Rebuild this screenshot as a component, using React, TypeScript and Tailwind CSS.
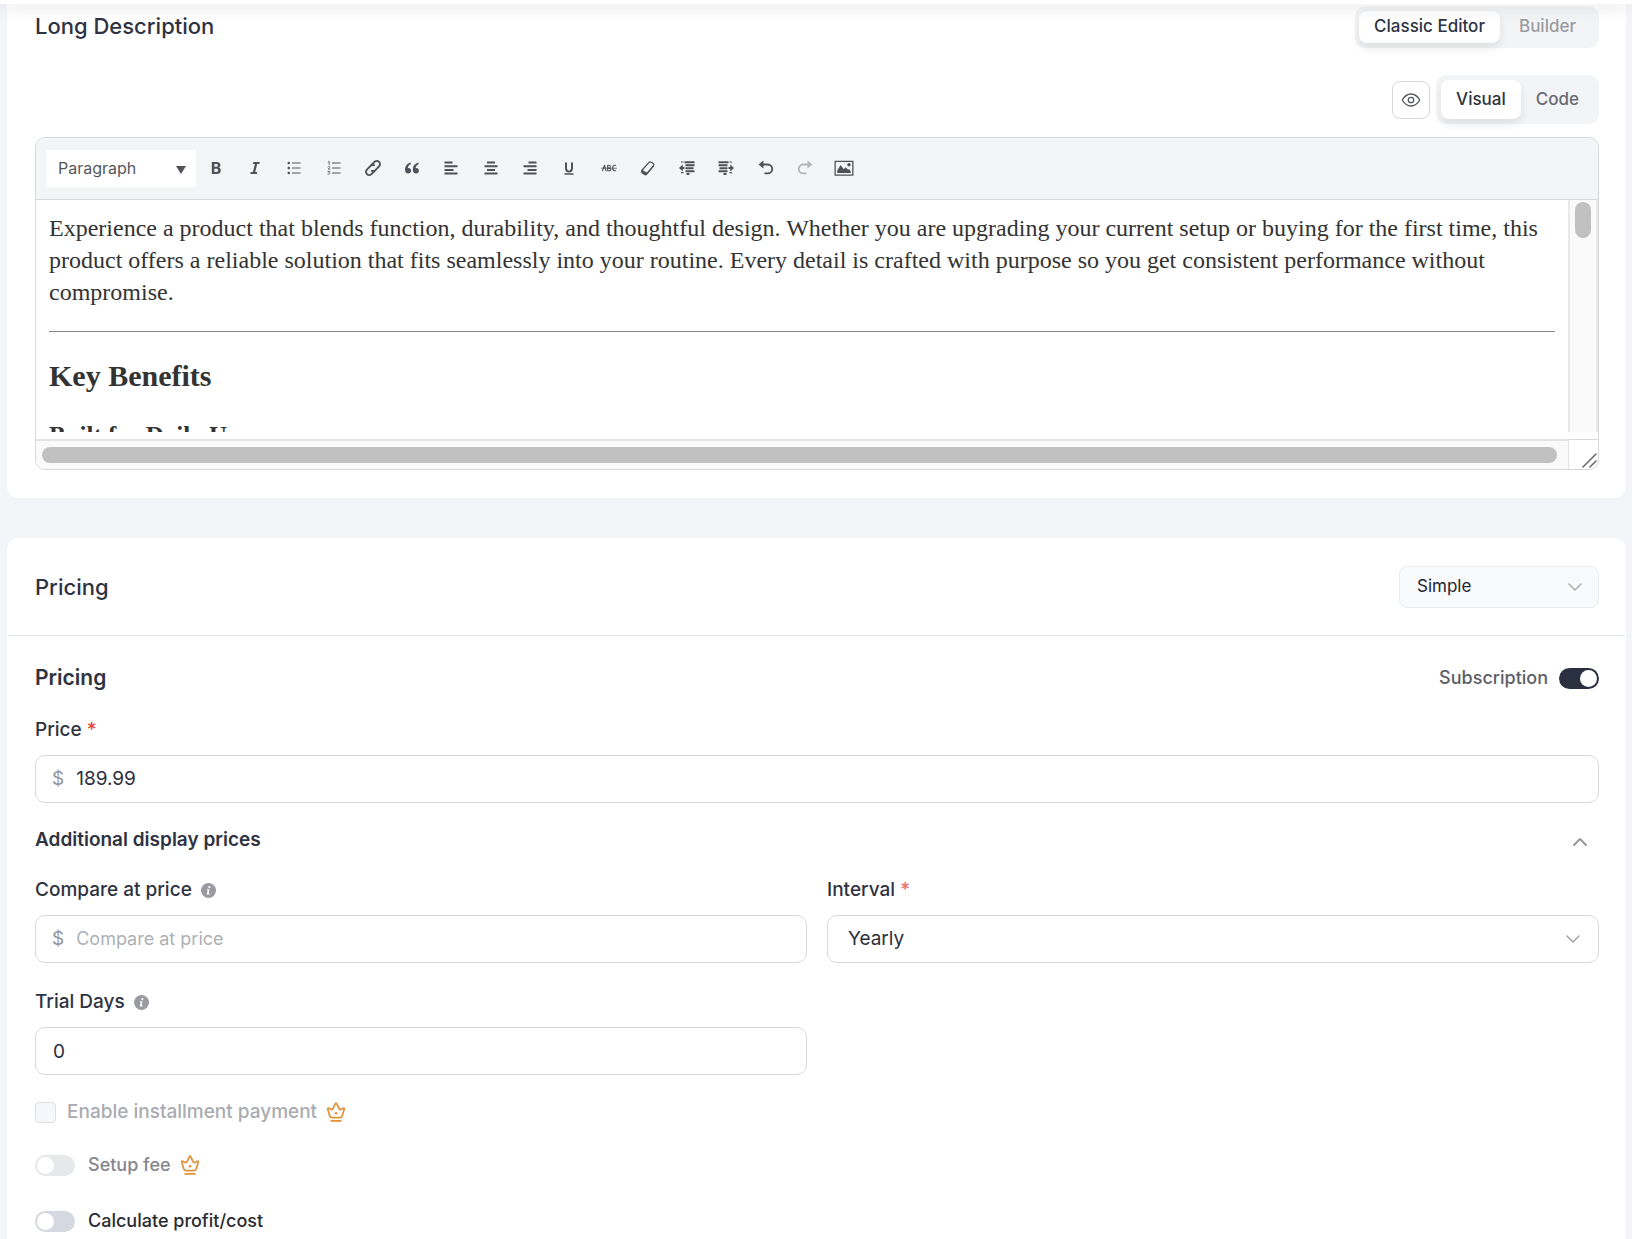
import { useState } from 'react'
import type { InputHTMLAttributes, ReactNode } from 'react'
import clsx from 'clsx'

const FIELD = 'h-12 w-full rounded-[10px] border border-[#d6d8dc] bg-white text-[19px] text-[#2b2e3c] outline-none'
const LABEL = 'text-[19px] leading-6 font-medium text-[#2f3241]'

const stroke = { fill: 'none', stroke: 'currentColor', strokeLinecap: 'round', strokeLinejoin: 'round' } as const

function Icon({ children, className = 'size-5' }: { children: ReactNode; className?: string }) {
  return (
    <svg viewBox="0 0 20 20" className={className} fill="currentColor" aria-hidden="true">
      {children}
    </svg>
  )
}

const tools: { label: string; icon: ReactNode; disabled?: boolean }[] = [
  {
    label: 'Bold',
    icon: (
      <path fillRule="evenodd" d="M5.8 4h4.7c2.5 0 3.9 1.1 3.9 3 0 1.3-.7 2.2-1.8 2.6 1.4.3 2.2 1.3 2.2 2.8 0 2.3-1.6 3.6-4.3 3.6H5.8zM8.4 6v2.8h1.7c1.1 0 1.7-.5 1.7-1.4S11.2 6 10.1 6zm0 4.7V14h1.9c1.2 0 1.8-.6 1.8-1.7 0-1-.7-1.6-1.9-1.6z" />
    ),
  },
  { label: 'Italic', icon: <path d="M8.3 4h6.4l-.4 1.9h-2.1L10.2 14h2.1l-.4 2H5.3l.4-2h2.2L9.9 5.9H7.9z" /> },
  {
    label: 'Bulleted list',
    icon: (
      <>
        <circle cx="4.8" cy="5" r="1.3" />
        <circle cx="4.8" cy="10" r="1.3" />
        <circle cx="4.8" cy="15" r="1.3" />
        <path d="M8 4.500h8.500v1H8zM8 9.500h8.500v1H8zM8 14.500h8.500v1H8z" />
      </>
    ),
  },
  {
    label: 'Numbered list',
    icon: (
      <>
        <path d="M8 4.500h8.500v1H8zM8 9.500h8.500v1H8zM8 14.500h8.500v1H8z" />
        <path {...stroke} strokeWidth=".8" d="m4.200 4 1-.7v3.400M4 8.700c.6-.6 1.800-.4 1.800.4 0 .7-1.200 1.300-1.800 2h2M4 13.400h1.800l-1 1.200c1.500 0 1.400 2.100-.9 1.700" />
      </>
    ),
  },
  {
    label: 'Link',
    icon: (
      <g {...stroke} strokeWidth="1.900" transform="rotate(-45 10 10)">
        <path d="M9 13.200H4.600a3.200 3.200 0 0 1 0-6.400h5.200a3.200 3.200 0 0 1 2.900 2" />
        <path d="M11 6.800h4.400a3.200 3.200 0 0 1 0 6.400h-5.200a3.200 3.200 0 0 1-2.900-2" />
      </g>
    ),
  },
  {
    label: 'Quote',
    icon: (
      <path d="M8.700 4.400C5 5.300 3 7.800 3 11.500 3 14 4.200 15.600 6.200 15.600c1.700 0 2.900-1.200 2.900-2.800S8 10.100 6.500 10.100c-.3 0-.5 0-.7.1.2-1.900 1.300-3.300 3.200-4.200zM16.500 4.400c-3.700.9-5.700 3.400-5.700 7.100 0 2.500 1.200 4.100 3.200 4.100 1.700 0 2.900-1.200 2.900-2.800s-1.100-2.700-2.600-2.700c-.3 0-.5 0-.7.1.2-1.900 1.300-3.300 3.200-4.200z" />
    ),
  },
  { label: 'Align left', icon: <path d="M3.500 3.500h8v2h-8zM3.500 7.200h13v2h-13zM3.500 10.900h9v2h-9zM3.500 14.600h13v2h-13z" /> },
  { label: 'Align center', icon: <path d="M6 3.500h8v2H6zM3.500 7.200h13v2h-13zM6 10.900h8v2H6zM3.500 14.600h13v2h-13z" /> },
  { label: 'Align right', icon: <path d="M8.500 3.500h8v2h-8zM3.500 7.200h13v2h-13zM7.500 10.900h9v2h-9zM3.500 14.600h13v2h-13z" /> },
  {
    label: 'Underline',
    icon: (
      <>
        <path d="M6 4.500h2v5.300c0 1.900.7 2.800 2 2.800s2-.9 2-2.800V4.500h2v5.400c0 3-1.400 4.500-4 4.500s-4-1.500-4-4.500z" />
        <path d="M5.500 15.300h9v1.400h-9z" />
      </>
    ),
  },
  {
    label: 'Strikethrough',
    icon: (
      <g {...stroke} strokeWidth="1.100">
        <path d="m3.500 12.800 2-5.600 1.600 5.600M8.700 7.200v5.600h1.500c2.200 0 2-2.700 0-2.700H8.700h1.200c1.900 0 1.900-2.900 0-2.900zM16.700 7.300h-1c-2.700 0-2.700 5.400 0 5.400h1" />
        <path strokeWidth=".8" d="M2.500 10.200h15" />
      </g>
    ),
  },
  {
    label: 'Clear formatting',
    icon: (
      <>
        <path {...stroke} strokeWidth="1.300" d="m4 12.200 6.800-7.600c.7-.8 1.600-1 2.500-.4l1.900 1.400c.8.7.9 1.500.2 2.300L8.700 15.600c-.6.7-1.400.9-2.200.4l-1.900-1.300C3.700 14.100 3.400 13 4 12.200z" />
        <path d="M3.700 11.600 9 14.800l6.900-7.600.1 1.400-7 8.100c-.7.800-1.800.9-2.800.3l-2-1.400c-1.100-.8-1.400-2.500-.5-4z" />
      </>
    ),
  },
  {
    label: 'Decrease indent',
    icon: (
      <path d="M7.500 3.200h10v2h-10zM8.500 6.200h9v2h-9zM8.500 9.200h8v2h-8zM8.500 12.200h9v2h-9zM9.500 15h3v2h-3zM4 3.400h2.600v1.200H4zM4 14h2.600v1.200H4zM7.500 9H5.800V6.500L2 10l3.800 3.500v-2.500h1.700z" />
    ),
  },
  {
    label: 'Increase indent',
    icon: (
      <path d="M2.500 3.200h10v2h-10zM2.500 6.200h9v2h-9zM3.500 9.200h8v2h-8zM2.500 12.200h9v2h-9zM7.500 15h3v2h-3zM13.400 3.400H16v1.200h-2.600zM13.400 14H16v1.200h-2.600zM12.500 9h1.700V6.500L18 10l-3.800 3.500v-2.500h-1.700z" />
    ),
  },
  {
    label: 'Undo',
    icon: (
      <>
        <path {...stroke} strokeWidth="1.900" strokeLinecap="butt" d="M6 6.500h5.800a4.400 4.400 0 0 1 0 8.900H8.500" />
        <path d="M7.500 2.500v8L2.500 6.500z" />
      </>
    ),
  },
  {
    label: 'Redo',
    disabled: true,
    icon: (
      <>
        <path {...stroke} strokeWidth="1.900" strokeLinecap="butt" d="M14 6.500H8.200a4.400 4.400 0 0 0 0 8.900h3.300" />
        <path d="M12.500 2.500v8l5-4z" />
      </>
    ),
  },
  {
    label: 'Add media',
    icon: (
      <>
        <path fillRule="evenodd" d="M.5 2.700h19v15H.5zM1.800 4v12.400h16.400V4z" />
        <path d="M3.200 15v-2.200L6.500 7l3.300 4.200 1.700-1.900 2.700 2.500.9-.7 1.700 2.300V15z" />
        <circle cx="15" cy="6.800" r="1.700" />
      </>
    ),
  },
]

function InfoIcon() {
  return (
    <svg viewBox="0 0 16 16" className="size-[15px] text-[#9a9ba1]" aria-hidden="true">
      <circle cx="8" cy="8" r="8" fill="currentColor" />
      <circle cx="8.900" cy="4.300" r="1.200" fill="#fff" />
      <path d="M6.300 6.600h2.800l-1 4.600h1.300l-.2 1H6.100l1-4.600h-1z" fill="#fff" />
    </svg>
  )
}

function CrownIcon() {
  return (
    <svg viewBox="0 0 20 20" className="size-5 text-[#e2913a]" {...stroke} strokeWidth="1.700" aria-hidden="true">
      <path d="M6.200 15.600h7.600c1.300 0 2.100-.6 2.500-1.900l2-6.700c.2-.8-.4-1.200-1.100-.8l-2.600 1.300c-.5.2-1 .1-1.300-.4L10.600 1.600c-.3-.6-.9-.6-1.200 0L6.700 7.100c-.3.5-.8.6-1.300.4L2.800 6.200c-.7-.4-1.300 0-1.100.8l2 6.700c.4 1.300 1.200 1.900 2.500 1.900z" />
      <path d="M5.200 18.900h9.600" />
      <circle cx="10" cy="11.300" r="1" fill="currentColor" strokeWidth=".8" />
    </svg>
  )
}

function Chevron({ up, className }: { up?: boolean; className?: string }) {
  return (
    <svg viewBox="0 0 16 16" className={clsx('size-4', className)} {...stroke} strokeWidth={up ? 2 : 1.2} aria-hidden="true">
      <path d={up ? 'm2 13 6-6 6 6' : 'm2 5 6 6 6-6'} />
    </svg>
  )
}

function Toggle({ className, ...props }: InputHTMLAttributes<HTMLInputElement>) {
  return (
    <input
      type="checkbox"
      role="switch"
      className={clsx(
        'h-[21px] w-10 shrink-0 appearance-none rounded-full bg-[#d5d8df] p-[2px] before:block before:size-[17px] before:rounded-full before:bg-white checked:bg-[#2b3040] checked:before:ml-auto disabled:bg-[#e6e8ea]',
        className,
      )}
      {...props}
    />
  )
}

function Segmented({ options, value, onChange, className }: { options: string[]; value: string; onChange: (v: string) => void; className?: string }) {
  return (
    <div className={clsx('flex rounded-[10px] bg-[#f3f4f6] text-[17px] font-medium', className)}>
      {options.map((option) => (
        <button
          key={option}
          type="button"
          onClick={() => onChange(option)}
          className={clsx('rounded-lg px-[15px]', option === value ? 'bg-white text-[#2f3241] shadow-[0_5px_10px_rgba(0,0,0,0.09)]' : 'text-[#696b72]')}
        >
          {option}
        </button>
      ))}
    </div>
  )
}

function PriceField({ id, ...props }: InputHTMLAttributes<HTMLInputElement>) {
  return (
    <div className="flex h-12 items-center gap-3 rounded-[10px] border border-[#d6d8dc] bg-white px-4">
      <span className="text-[19px] text-[#94969c]">$</span>
      <input id={id} className="w-full min-w-0 bg-transparent text-[19px] text-[#2b2e3c] outline-none placeholder:text-lg placeholder:text-[#adb0b6]" {...props} />
    </div>
  )
}

function LongDescription() {
  const [mode, setMode] = useState('Classic Editor')
  const [view, setView] = useState('Visual')

  return (
    <section className="rounded-b-xl bg-white pt-[2px] pr-[27px] pb-7 pl-7">
      <div className="flex h-[42px] items-start justify-between">
        <h2 className="text-[22px] leading-10 font-medium text-[#2f3241]">Long Description</h2>
        <Segmented
          className="h-[42px] px-1 py-[5px] [&>button:last-child]:px-[19px] [&>button:last-child]:text-[#9b9ca2]"
          options={['Classic Editor', 'Builder']}
          value={mode}
          onChange={setMode}
        />
      </div>
      <div className="mt-[27px] flex items-center justify-end gap-[6px]">
        <button type="button" aria-label="Preview" className="flex size-[38px] items-center justify-center rounded-lg border border-[#d6d8dc] text-[#55575e]">
          <svg viewBox="0 0 20 16" className="h-4 w-5" {...stroke} strokeWidth="1.300" aria-hidden="true">
            <path d="M1.200 8C3.500 4.200 6.500 2 10 2s6.500 2.200 8.800 6c-2.300 3.800-5.300 6-8.800 6S3.500 11.800 1.200 8z" />
            <circle cx="10" cy="8" r="2.700" />
          </svg>
        </button>
        <Segmented className="h-[49px] p-[5px]" options={['Visual', 'Code']} value={view} onChange={setView} />
      </div>

      <div className="mt-[13px] overflow-hidden rounded-[10px] border border-[#d6d8dc]">
        <div className="flex h-[62px] items-center border-b border-[#d6d8dc] bg-[#f4f5f7] pb-px pl-[10px]">
          <div className="relative">
            <select aria-label="Block format" className="h-[37px] w-[150px] appearance-none bg-white pl-3 text-base text-[#55575c] outline-none">
              <option>Paragraph</option>
            </select>
            <svg viewBox="0 0 10 8" className="pointer-events-none absolute top-[16px] right-[10px] h-2 w-[10px] text-[#505258]" fill="currentColor" aria-hidden="true">
              <path d="M0 0h10L5 8z" />
            </svg>
          </div>
          <div className="grid w-[668px] grid-cols-17">
            {tools.map((tool) => (
              <button key={tool.label} type="button" aria-label={tool.label} disabled={tool.disabled} className="flex justify-center text-[#50525a] disabled:text-[#b4b6ba]">
                <Icon>{tool.icon}</Icon>
              </button>
            ))}
          </div>
        </div>

        <div className="flex h-[232px]">
          <article className="flex-1 overflow-hidden px-[13px] pt-3 font-['Liberation_Serif',serif] text-[#333]">
            <p className="text-2xl leading-8">
              Experience a product that blends function, durability, and thoughtful design. Whether you are upgrading your current setup or buying for the first time, this product offers a reliable solution that fits
              seamlessly into your routine. Every detail is crafted with purpose so you get consistent performance without compromise.
            </p>
            <hr className="mt-[23px] border-t border-[#85878a]" />
            <h2 className="mt-7 text-[30px] leading-8 font-bold">Key Benefits</h2>
            <h3 className="mt-7 text-[25px] leading-8 font-bold">Built for Daily Use</h3>
          </article>
          <div className="w-[30px] border-x-2 border-[#e8e8e8] bg-[#fafafa] pt-[2px]">
            <div className="mx-auto h-9 w-4 rounded-full bg-[#c1c1c1]" />
          </div>
        </div>
        <div className="mt-[7px] flex h-[30px]">
          <div className="flex-1 border-t-2 border-r border-[#e3e3e3] bg-[#fafafa] py-[6px] pr-[11px] pl-[6px]">
            <div className="h-4 rounded-full bg-[#c1c1c1]" />
          </div>
          <div className="flex w-[29px] items-end justify-end border-t border-[#d6d8dc]">
            <svg viewBox="0 0 16 16" className="size-4 text-[#666]" {...stroke} strokeWidth="1.500" aria-hidden="true">
              <path d="M1 14 14 1M8 14l6-6" />
            </svg>
          </div>
        </div>
      </div>
    </section>
  )
}

function Pricing() {
  const [subscription, setSubscription] = useState(true)
  const [open, setOpen] = useState(true)

  return (
    <section className="flex-1 rounded-t-xl bg-white">
      <div className="mx-px flex h-[98px] items-center justify-between border-b border-[#e8e9ec] pr-[26px] pl-[27px]">
        <h2 className="text-[22px] leading-7 font-medium text-[#2f3241]">Pricing</h2>
        <div className="relative">
          <select aria-label="Pricing type" className="h-[42px] w-[200px] appearance-none rounded-lg border border-[#eaecef] bg-[#f9fafb] pl-[17px] text-[17px] text-[#232635] outline-none">
            <option>Simple</option>
            <option>Simple variations</option>
          </select>
          <Chevron className="pointer-events-none absolute top-[13px] right-4 text-[#a0a2a8]" />
        </div>
      </div>

      <div className="pt-7 pr-[27px] pl-7">
        <div className="flex h-7 items-center justify-between">
          <h3 className="text-[21px] font-semibold text-[#2f3241]">Pricing</h3>
          <label className="flex items-center gap-[11px] text-lg font-medium text-[#5c5e64]">
            Subscription
            <Toggle checked={subscription} onChange={(e) => setSubscription(e.target.checked)} />
          </label>
        </div>

        <label htmlFor="price" className={clsx(LABEL, 'mt-[26px] mb-[13px] block')}>
          Price <span className="text-[#dc4a3d]">*</span>
        </label>
        <PriceField id="price" defaultValue="189.99" />

        <button type="button" onClick={() => setOpen(!open)} className="mt-[25px] flex w-full items-center justify-between pr-[11px] text-[19px] leading-6 font-semibold text-[#2f3241]">
          Additional display prices
          <Chevron up={open} className="text-[#96989d]" />
        </button>

        {open && (
          <div className="mt-[26px] grid grid-cols-2 gap-x-5 gap-y-[27px]">
            <div>
              <div className="mb-[13px] flex items-center gap-[9px]">
                <label htmlFor="compare" className={LABEL}>Compare at price</label>
                <InfoIcon />
              </div>
              <PriceField id="compare" placeholder="Compare at price" />
            </div>
            <div>
              <label htmlFor="interval" className={clsx(LABEL, 'mb-[13px] block')}>
                Interval <span className="text-[#e8706a]">*</span>
              </label>
              <div className="relative">
                <select id="interval" className={clsx(FIELD, 'appearance-none pl-5')}>
                  <option>Yearly</option>
                  <option>Monthly</option>
                </select>
                <Chevron className="pointer-events-none absolute top-4 right-[18px] text-[#96989d]" />
              </div>
            </div>
            <div>
              <div className="mb-[13px] flex items-center gap-[9px]">
                <label htmlFor="trial" className={LABEL}>Trial Days</label>
                <InfoIcon />
              </div>
              <input id="trial" defaultValue="0" className={clsx(FIELD, 'px-[17px]')} />
            </div>
          </div>
        )}

        <label className="mt-[25px] flex h-6 items-center gap-[11px] text-[19px] font-medium text-[#a9abb0]">
          <input type="checkbox" disabled className="size-[21px] appearance-none rounded border border-[#dcdfe3] bg-[#f5f7fa]" />
          <span className="flex items-center gap-[9px]">
            Enable installment payment
            <CrownIcon />
          </span>
        </label>
        <label className="mt-[29px] flex h-6 items-center gap-[13px] text-lg font-medium text-[#85878c]">
          <Toggle disabled />
          <span className="flex items-center gap-[9px]">
            Setup fee
            <CrownIcon />
          </span>
        </label>
        <label className="mt-8 flex h-6 items-center gap-[13px] text-lg font-medium text-[#2a2b30]">
          <Toggle />
          Calculate profit/cost
        </label>
      </div>
    </section>
  )
}

export default function App() {
  return (
    <div className="flex min-h-screen flex-col bg-[#f4f5f9] font-['Inter',sans-serif]">
      <header className="relative z-10 h-1 bg-white shadow-[0_2px_16px_rgba(0,0,0,0.2)]" />
      <main className="flex flex-1 flex-col gap-10 pr-[6px] pl-[7px]">
        <LongDescription />
        <Pricing />
      </main>
    </div>
  )
}
